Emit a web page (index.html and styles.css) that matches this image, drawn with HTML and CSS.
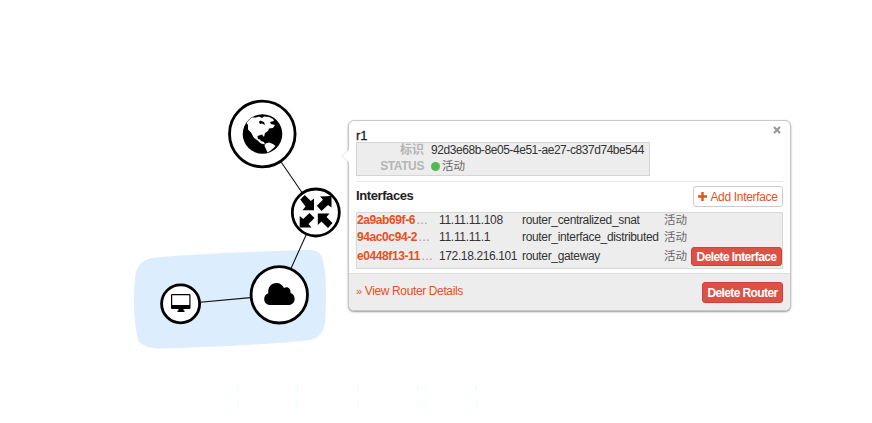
FILE: index.html
```
<!DOCTYPE html>
<html lang="zh-CN">
<head>
<meta charset="utf-8">
<title>r1</title>
<link rel="stylesheet" href="styles.css">
</head>
<body>
<main class="canvas">
<svg class="topology" width="872" height="423" viewBox="0 0 872 423">
  <path class="network" d="M152 258Q185 254 303 250Q318 248 322 257Q328 275 325 323Q323 337 310 340Q270 345 164 348.500Q143 349 138 340Q132 315 135 277Q137 261 152 258Z"/>
  <g class="link"><path d="M262 134 316 213 279 295 181 304"/></g>
  <g class="node">
    <circle cx="262.300" cy="134" r="32.800"/>
    <circle cx="315.800" cy="212.500" r="23.500"/>
    <circle cx="279.300" cy="294.800" r="28.200"/>
    <circle cx="180.600" cy="303.800" r="19"/>
  </g>
  <circle cx="262.500" cy="134" r="19.800"/>
  <path class="land" d="M246.500 123 249 120 252 117.500 256 117.500 259 116.500 262 118 264 116.500 269 117 273 119 274 121 270 122 271 124 275 125 273 128 269 128.500 268 131 265 133 264 137 262 134.500 257.500 136 258 139 260 139.500 261 141 264 142 265 144.500 261 143.500 257 140 254 138 251 132.500 248 129.500 248 125Z"/>
  <path class="land" d="M265.500 143.500 269 142.500 273 144 275.500 146 273 148.500 270 151 267.500 152.500 266 149 264.500 146Z"/>
  <path d="M260 120.500 264 122 265 125 262 123.500 260 124 259 122Z"/>
  <g class="arrows">
    <path d="M300.300 199.500 304.800 195 310.800 201 314 198.500 314 210.300 302.500 210.300 305.500 206.500Z"/>
    <path d="M316.800 205.800 323 199.700 320 196.500 331.500 196 331.500 207.500 328 205 321.500 211Z"/>
    <path d="M309.500 213 314.500 218 308.500 224 311.500 227.500 299.700 227.500 299.700 216 303.200 219Z"/>
    <path d="M317.800 213.500 329.500 213.500 326.500 217 332.500 223 328 228 321.500 221.500 317.800 225Z"/>
  </g>
  <path d="M270.500 305C266.500 305 264.200 302.500 264.200 299C264.200 296 266 294 268.300 293.200C267.600 287 271.500 283 276.500 283C280 283 282.700 285 284 288C287.500 286 291 288.500 290.500 293C293 293.500 294.600 296 294.600 299C294.600 302.500 292 305 288.500 305Z"/>
  <path fill-rule="evenodd" d="M172 294H189.500Q190.500 294 190.500 295V308Q190.500 309 189.500 309H183.500V310.500H184.500V312H177.500V310.500H178.500V309H172Q171 309 171 308V295Q171 294 172 294ZM172.200 295.300V305H189.300V295.300Z"/>
  <g class="ticks"><path d="M237.500 385v5m0 11v6M297.500 385v5m0 11v6M357.500 385v5m0 11v6M417.500 385v5m0 11v6M476.500 385v5m0 11v6"/></g>
</svg>

<section class="popup">
  <svg class="pointer" width="8" height="14" viewBox="0 0 8 14"><path class="pointer-fill" d="M8 1 1 7 8 13Z"/><path class="pointer-edge" d="M7 1 1 7 7 13"/></svg>
  <div class="content">
    <header class="title"><h1>r1</h1><svg class="close" width="8" height="8" viewBox="0 0 8 8"><path d="M1 1 7 7M7 1 1 7"/></svg></header>
    <dl class="info">
      <dt class="id-label">标识</dt><dd class="uuid">92d3e68b-8e05-4e51-ae27-c837d74be544</dd>
      <dt class="status-label">STATUS</dt><dd class="status"><i class="dot"></i>活动</dd>
    </dl>
    <div class="section">
      <h2>Interfaces</h2>
      <button class="btn add"><svg width="9" height="9" viewBox="0 0 9 9"><path d="M4.500 0V9M0 4.500H9"/></svg>Add Interface</button>
    </div>
    <div class="ports">
      <div class="port"><a><b>2a9ab69f-6</b>…</a><span class="ip">11.11.11.108</span><span class="name">router_centralized_snat</span><span class="state">活动</span></div>
      <div class="port"><a><b>94ac0c94-2</b>…</a><span class="ip">11.11.11.1</span><span class="name">router_interface_distributed</span><span class="state">活动</span></div>
      <div class="port last"><a><b>e0448f13-11</b>…</a><span class="ip gateway">172.18.216.101</span><span class="name">router_gateway</span><span class="state">活动</span><button class="btn danger small">Delete Interface</button></div>
    </div>
  </div>
  <footer><a class="details"><span class="raquo">»</span>View Router Details</a><button class="btn danger">Delete Router</button></footer>
</section>
</main>
</body>
</html>
```
FILE: styles.css
```
* { box-sizing: border-box; }
body { margin: 0; background: #fff; color: #333; font: 12px/16px "Liberation Sans", "Noto Sans CJK SC", sans-serif; }
.canvas { position: relative; width: 872px; height: 423px; overflow: hidden; }
.topology { display: block; }
.network { fill: #dcedfe; }
.link path { fill: none; stroke: #111; stroke-width: 1.1; }
.node circle { fill: #fff; stroke: #000; stroke-width: 2.8; }
.land { fill: #fff; }
.ticks path { stroke: #e4ffff; }
.popup { position: absolute; left: 348px; top: 120px; width: 443px; height: 191px; display: flex; flex-direction: column; background: #fff; border: 1px solid #c8c8c8; border-radius: 6px; box-shadow: 0 1px 2px #999; }
.pointer { position: absolute; left: -8px; top: 28px; }
.pointer-fill { fill: #fff; }
.pointer-edge { fill: none; stroke: #ddd; stroke-dasharray: 2 1; }
.content { flex: 1; padding: 5px 7px 0; }
.title { display: flex; justify-content: space-between; height: 16px; }
h1, h2 { margin: 0; font-size: 13px; line-height: 19px; color: #222; }
h1 { font-weight: normal; -webkit-text-stroke: .3px #222; }
.close { margin: 0 2px 0 0; fill: none; stroke: #999; stroke-width: 2.2; }
.info { display: grid; grid-template-columns: 67px 1fr; grid-template-rows: 16px 16px; column-gap: 7px; width: 294px; height: 34px; margin: 0; background: #ededed; border: 1px solid #d5d5d5; }
dt { text-align: right; color: #b5b5b5; font-weight: bold; line-height: 14px; }
dd { margin: 0; line-height: 14px; }
.status-label, .status { line-height: 15px; }
.status-label { letter-spacing: -.4px; }
.uuid { letter-spacing: -.44px; }
.status { display: flex; gap: 2px; color: #666; font-size: 11.5px; }
.dot { width: 9px; height: 9px; margin-top: 3px; border-radius: 50%; background: #53b953; }
.section { display: flex; justify-content: space-between; align-items: flex-start; height: 31px; margin-top: 5px; padding-top: 4px; border-top: 1px solid #e8e8e8; }
.section h2 { line-height: 20px; letter-spacing: -.4px; }
.btn { display: flex; align-items: center; justify-content: center; height: 21px; padding: 0; border: 1px solid #ccc; border-radius: 3px; background: #fff; font: inherit; }
.add { width: 90px; gap: 3px; color: #e8501e; letter-spacing: -.32px; }
.add path { stroke: #e8501e; stroke-width: 2.4; }
.ports { height: 57px; background: #ededed; border: 1px solid #d8d8d8; }
.port { display: grid; grid-template-columns: 82px 83px 142px 27px 91px; height: 17px; line-height: 14px; white-space: nowrap; }
.port a { color: #999; }
.port b, .details { color: #e8501e; }
.port b { margin-right: 1px; letter-spacing: -.4px; }
.ip { letter-spacing: -.3px; }
.gateway { letter-spacing: -.38px; }
.name { letter-spacing: -.34px; }
.state { color: #666; font-size: 11.5px; }
.last { height: 20px; line-height: 18px; }
.danger { width: 81px; background: #dd5144; border-color: #d43f3a; color: #fff; font-weight: bold; letter-spacing: -.6px; }
.small { width: 91px; height: 19px; }
footer { display: flex; justify-content: space-between; height: 37px; padding: 8px 7px; background: #ededed; border-top: 1px solid #ddd; border-radius: 0 0 5px 5px; }
.details { display: flex; gap: 3px; line-height: 18px; letter-spacing: -.37px; }
.raquo { font-size: 11px; }
```
